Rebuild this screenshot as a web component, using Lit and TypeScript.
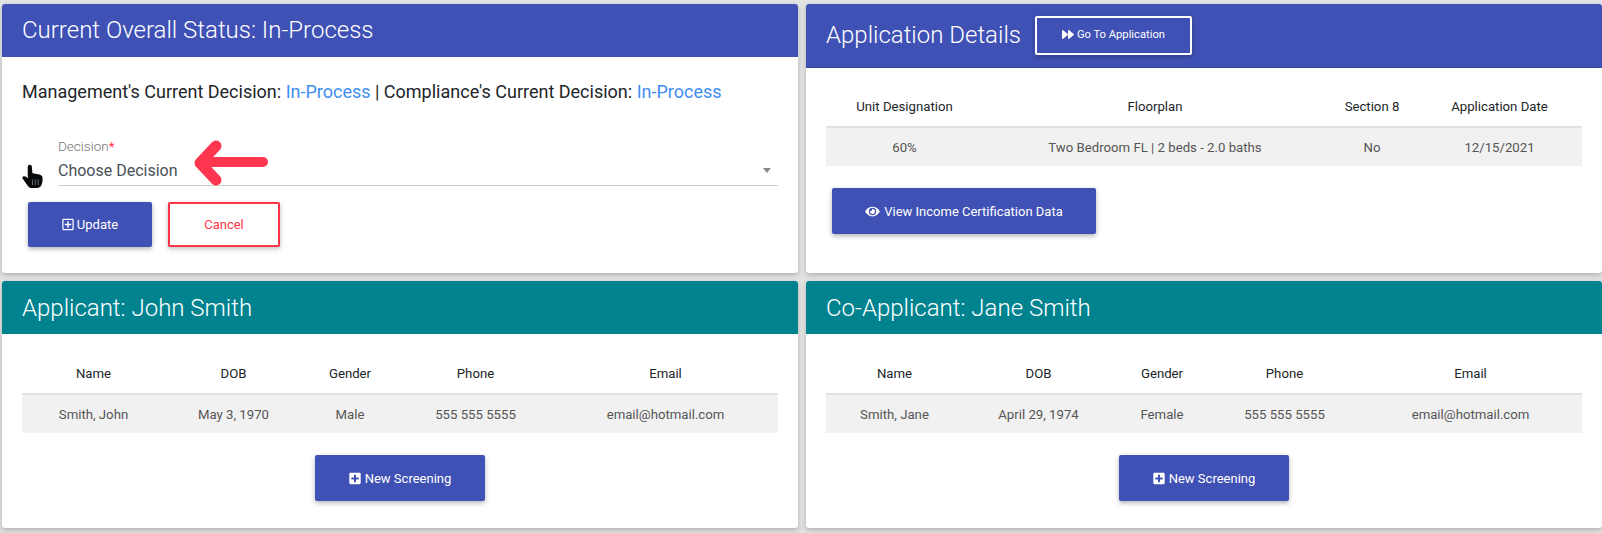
import { LitElement, html, css } from "lit";
import { customElement } from "lit/decorators.js";

const plusSquare = html`<svg class="ic" viewBox="0 0 448 512"><path fill="currentColor" d="M352 240v32c0 6.600-5.400 12-12 12h-88v88c0 6.600-5.400 12-12 12h-32c-6.600 0-12-5.400-12-12v-88h-88c-6.600 0-12-5.400-12-12v-32c0-6.600 5.400-12 12-12h88v-88c0-6.600 5.400-12 12-12h32c6.600 0 12 5.400 12 12v88h88c6.600 0 12 5.400 12 12zm96-160v352c0 26.500-21.500 48-48 48H48c-26.500 0-48-21.500-48-48V80c0-26.500 21.500-48 48-48h352c26.500 0 48 21.500 48 48zm-48 346V86c0-3.300-2.700-6-6-6H54c-3.300 0-6 2.700-6 6v340c0 3.300 2.700 6 6 6h340c3.300 0 6-2.700 6-6z"/></svg>`;
const plusSolid = html`<svg class="ic" viewBox="0 0 448 512"><path fill="currentColor" d="M400 32H48C21.500 32 0 53.500 0 80v352c0 26.500 21.500 48 48 48h352c26.500 0 48-21.500 48-48V80c0-26.500-21.500-48-48-48zm-32 252c0 6.600-5.400 12-12 12h-92v92c0 6.600-5.400 12-12 12h-56c-6.600 0-12-5.400-12-12v-92H92c-6.600 0-12-5.400-12-12v-56c0-6.600 5.400-12 12-12h92v-92c0-6.600 5.400-12 12-12h56c6.600 0 12 5.400 12 12v92h92c6.600 0 12 5.400 12 12v56z"/></svg>`;
const forward = html`<svg class="ic" viewBox="0 0 512 512"><path fill="currentColor" d="M500.500 231.400l-192-160C287.900 54.300 256 68.600 256 96v320c0 27.400 31.900 41.800 52.500 24.600l192-160c15.300-12.800 15.300-36.400 0-49.200zm-256 0l-192-160C31.900 54.300 0 68.600 0 96v320c0 27.400 31.900 41.800 52.500 24.600l192-160c15.300-12.800 15.300-36.400 0-49.200z"/></svg>`;
const eye = html`<svg class="ic eye" viewBox="0 0 576 512"><path fill="currentColor" d="M572.520 241.400C518.290 135.590 410.930 64 288 64S57.680 135.640 3.480 241.410a32.350 32.350 0 0 0 0 29.190C57.710 376.410 165.070 448 288 448s230.320-71.640 284.520-177.410a32.350 32.350 0 0 0 0-29.190zM288 400a144 144 0 1 1 144-144 143.930 143.930 0 0 1-144 144zm0-240a95.310 95.310 0 0 0-25.310 3.790 47.850 47.850 0 0 1-66.900 66.900A95.780 95.780 0 1 0 288 160z"/></svg>`;

@customElement("app-root")
export class AppRoot extends LitElement {
  static styles = css`
    :host { display: block; width: 1602px; height: 533px; background: #e2e2e2; overflow: hidden; font-family: Roboto, sans-serif; color: #212529; position: relative; }
    .grid { display: grid; grid-template-columns: 796px 796px; column-gap: 8px; grid-template-rows: 269px 247px; row-gap: 8px; padding: 4px 2px 0; }
    .card { background: #fff; border-radius: 3px; box-shadow: 0 2px 5px rgba(0,0,0,.22); overflow: hidden; display: flex; flex-direction: column; position: relative; }
    .head { color: #fff; font-weight: 300; font-size: 24px; display: flex; align-items: center; padding: 0 20px; flex: none; box-sizing: border-box; }
    .indigo { background: #3f51b5; }
    .teal { background: #00838f; }
    .h53 { height: 53px; }
    .raised { padding-bottom: 2px; }
    .h64 { height: 64px; gap: 14px; padding-bottom: 2px; border-bottom: 1px solid #35449b; }
    .goto { width: 157px; height: 39px; margin-top: 2px; padding-bottom: 2px; box-sizing: border-box; border: 2px solid #fff; border-radius: 2px; background: transparent; color: #fff; font: 400 11.200px Roboto, sans-serif; display: flex; align-items: center; justify-content: center; gap: 3px; box-shadow: 0 2px 5px rgba(0,0,0,.25); }
    .body { padding: 20px; flex: 1; }
    .decisions { font-size: 18px; line-height: 27px; margin-top: 1px; }
    .blue { color: #3f8ef0; }
    .field { margin: 34px 0 0 36px; }
    .label { font-size: 13.500px; font-weight: 300; color: #757575; line-height: 15px; }
    .star { color: #ff3547; font-weight: 400; }
    .select { height: 32px; padding-top: 2px; border-bottom: 1px solid #ccc; font-size: 16px; color: #495057; display: flex; align-items: center; justify-content: space-between; box-sizing: border-box; padding-right: 7px; }
    .caret { width: 0; height: 0; border-left: 4px solid transparent; border-right: 4px solid transparent; border-top: 5px solid #888; }
    .hand { position: absolute; left: 22px; top: 164px; width: 22px; height: 25px; }
    .arrow { position: absolute; left: 192px; top: 138px; width: 78px; height: 50px; }
    .actions { display: flex; gap: 16px; margin: 16px 0 0 6px; }
    button { font-family: Roboto, sans-serif; font-size: 13px; border-radius: 2px; cursor: pointer; }
    .solid { background: #3f51b5; color: #fff; border: 0; box-shadow: 0 2px 5px rgba(0,0,0,.3); height: 46px; display: inline-flex; align-items: center; justify-content: center; gap: 3px; }
    .update { width: 124px; height: 45px; }
    .cancel { width: 112px; height: 45px; background: #fff; color: #ff3547; border: 2px solid #ff3547; box-shadow: 0 2px 5px rgba(0,0,0,.25); }
    .ic { width: 12px; height: 13px; display: block; }
    .eye { width: 15px; }
    table { width: 100%; border-collapse: collapse; font-size: 13.200px; table-layout: fixed; }
    th { font-weight: 400; height: 39px; border-bottom: 2px solid #dee2e6; text-align: center; padding: 0; color: #212529; }
    td { height: 38px; background: #f1f1f1; text-align: center; padding: 0; color: #555; }
    .center { display: flex; justify-content: center; margin-top: 22px; }
    .view { width: 264px; font-size: 13px; margin: 22px 0 0 6px; gap: 4px; }
    .ns { width: 170px; gap: 4px; }
    .tb { padding-top: 20px; }
    .ds { padding-top: 19px; }
  `;

  private person(title: string, cols: number[], row: string[]) {
    return html`<section class="card">
      <div class="head teal h53">${title}</div>
      <div class="body tb">
        <table>
          <colgroup>${cols.map((w) => html`<col style="width:${w}px"/>`)}<col/></colgroup>
          <thead><tr>${["Name", "DOB", "Gender", "Phone", "Email"].map((h) => html`<th>${h}</th>`)}</tr></thead>
          <tbody><tr>${row.map((c) => html`<td>${c}</td>`)}</tr></tbody>
        </table>
        <div class="center"><button class="solid ns">${plusSolid} New Screening</button></div>
      </div>
    </section>`;
  }

  render() {
    return html`<div class="grid">
      <section class="card">
        <div class="head indigo h53 raised">Current Overall Status: In-Process</div>
        <div class="body">
          <div class="decisions">Management's Current Decision: <span class="blue">In-Process</span> | Compliance's Current Decision: <span class="blue">In-Process</span></div>
          <div class="field">
            <div class="label">Decision<span class="star">*</span></div>
            <div class="select"><span>Choose Decision</span><span class="caret"></span></div>
          </div>
          <div class="actions">
            <button class="solid update">${plusSquare} Update</button>
            <button class="cancel">Cancel</button>
          </div>
        </div>
      </section>
      <section class="card">
        <div class="head indigo h64">Application Details <div class="goto">${forward} Go To Application</div></div>
        <div class="body ds">
          <table>
            <colgroup><col style="width:157px"/><col style="width:344px"/><col style="width:90px"/><col/></colgroup>
            <thead><tr><th>Unit Designation</th><th>Floorplan</th><th>Section 8</th><th>Application Date</th></tr></thead>
            <tbody><tr><td>60%</td><td>Two Bedroom FL | 2 beds - 2.0 baths</td><td>No</td><td>12/15/2021</td></tr></tbody>
          </table>
          <button class="solid view">${eye} View Income Certification Data</button>
        </div>
      </section>
      ${this.person("Applicant: John Smith", [143, 137, 96, 155], ["Smith, John", "May 3, 1970", "Male", "555 555 5555", "email@hotmail.com"])}
      ${this.person("Co-Applicant: Jane Smith", [137, 151, 96, 149], ["Smith, Jane", "April 29, 1974", "Female", "555 555 5555", "email@hotmail.com"])}
    </div>
    <svg class="hand" viewBox="0 0 22 25"><path fill="#0a0a0a" d="M7 1c1.300-.8 2.600 0 2.800 1.500L10.500 9.500c1-.4 1.900-.3 2.700.4 1-.5 2-.3 2.700.5 1-.4 2-.1 2.600.7.900.3 1.800 1.200 2 2.500.2 2.500 0 4.700-.8 7-.7 2-2.500 3.400-4.700 3.400H10c-2 0-3.300-.8-4.300-2.300L.6 14.500c-.6-1 .1-2.300 1.400-2.300 1.500 0 2.900.9 3.800 2L5.700 3C5.700 2.200 6.200 1.400 7 1z"/><path stroke="#9fb0c0" stroke-opacity=".65" stroke-width=".9" d="M10.500 15.500v5.500M13.300 15.500v5.500M16.100 15.500v5.500"/></svg>
    <svg class="arrow" viewBox="0 0 78 50"><path fill="none" stroke="#ff3650" stroke-width="10" stroke-linecap="round" d="M71 24H14"/><path fill="none" stroke="#ff3650" stroke-width="11" stroke-linecap="round" stroke-linejoin="round" d="M24 8L8 25L24 42"/></svg>`;
  }
}
